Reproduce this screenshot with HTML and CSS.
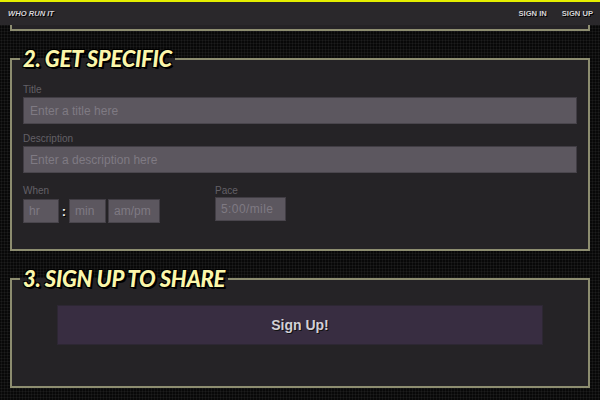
FILE: index.html
```html
<!DOCTYPE html>
<html lang="en">
<head>
<meta charset="utf-8">
<title>Who Run It</title>
<link rel="stylesheet" href="styles.css">
</head>
<body>
<header class="nav">
  <a class="brand" href="#">WHO RUN IT</a>
  <nav class="nav-links">
    <a href="#">SIGN IN</a>
    <a href="#">SIGN UP</a>
  </nav>
</header>
<main class="page">
  <div class="section section-prev"></div>
  <fieldset class="section specifics">
    <legend class="section-title">2. Get Specific</legend>
    <div class="field">
      <label class="label">Title</label>
      <input class="input" type="text" placeholder="Enter a title here">
    </div>
    <div class="field">
      <label class="label">Description</label>
      <input class="input" type="text" placeholder="Enter a description here">
    </div>
    <div class="row">
      <div class="field when">
        <label class="label">When</label>
        <div class="time">
          <input class="input small hr" type="text" placeholder="hr">
          <span class="colon">:</span>
          <input class="input small min" type="text" placeholder="min">
          <input class="input small ampm" type="text" placeholder="am/pm">
        </div>
      </div>
      <div class="field pace">
        <label class="label">Pace</label>
        <input class="input small pace-input" type="text" placeholder="5:00/mile">
      </div>
    </div>
  </fieldset>
  <fieldset class="section share">
    <legend class="section-title">3. Sign Up to Share</legend>
    <div class="btn-wrap">
      <button class="signup-btn" type="button">Sign Up!</button>
    </div>
  </fieldset>
</main>
</body>
</html>
```

FILE: styles.css
```css
* { box-sizing: border-box; }

html, body {
  margin: 0;
  padding: 0;
}

body {
  width: 600px;
  height: 400px;
  overflow: hidden;
  background-color: #080808;
  background-image: radial-gradient(circle, #1d1d1d 0.9px, transparent 1.1px);
  background-size: 3px 3px;
  font-family: "Liberation Sans", Arial, sans-serif;
}

.nav {
  position: fixed;
  top: 0;
  left: 0;
  right: 0;
  height: 25px;
  border-top: 2px solid #e4ee00;
  background: #2a282b;
  display: flex;
  align-items: center;
  justify-content: space-between;
  padding: 0 7px 0 8px;
  z-index: 10;
}

.brand, .nav-links a {
  color: #d6d4d8;
  text-decoration: none;
  font-weight: bold;
  font-size: 7.6px;
  text-shadow: 1px 1px 0 #000;
}

.brand { font-style: italic; }

.nav-links {
  display: flex;
  gap: 15px;
}

.page {
  display: flex;
  flex-direction: column;
}

.section {
  margin: 0 10px;
  border: 2px solid #8d8d70;
  background: #252326;
  padding: 0 11px;
}

.section-prev {
  height: 31px;
  border-top: none;
}

fieldset.section {
  min-width: 0;
  margin-top: 17px;
}

.specifics { padding-top: 14px; }
.share { padding-top: 15px; }

.section-title {
  font-family: "Lato", "Open Sans", sans-serif;
  font-weight: 900;
  font-style: italic;
  text-transform: uppercase;
  font-size: 22px;
  line-height: 22px;
  color: #fbf7ab;
  padding: 0 3px;
  margin-left: -3px;
  letter-spacing: -0.3px;
  text-shadow: 1px 1px 0 #000, -1px 1px 0 #000, 1px -1px 0 #000, -1px -1px 0 #000, 2px 2px 0 #000;
}

.field {
  display: flex;
  flex-direction: column;
}

.label {
  font-size: 10px;
  line-height: 12px;
  color: #636066;
  margin-top: 0;
  margin-bottom: 1px;
}

.field + .field { margin-top: 9px; }

.input {
  height: 27px;
  background: #5c575f;
  border: 1px solid #413d44;
  border-bottom-color: #4a464d;
  color: #ddd;
  font-family: "Liberation Sans", Arial, sans-serif;
  font-size: 12px;
  padding: 0 6px;
  outline: none;
}

.input::placeholder { color: #7f7a83; }

.row {
  display: flex;
  align-items: flex-start;
  gap: 55px;
  margin-top: 12px;
  padding-bottom: 26px;
}

.row .field { margin-top: 0; }

.time {
  display: flex;
  align-items: center;
  margin-top: 1px;
}

.small {
  height: 24px;
  font-size: 12px;
  padding: 0 5px;
}

.hr { width: 36px; }
.min { width: 37px; }
.ampm { width: 52px; margin-left: 2px; }
.pace-input { width: 71px; margin-top: -1px; letter-spacing: 0.4px; }

.colon {
  width: 10px;
  text-align: center;
  color: #f2f2f2;
  font-weight: bold;
  font-size: 13px;
  text-shadow: 1px 1px 0 #000;
}

.btn-wrap {
  padding: 0 34px 41px;
}

.signup-btn {
  display: block;
  width: 100%;
  height: 40px;
  background: #382d41;
  border: 1px solid #2d2733;
  color: #d3d0d6;
  font-family: "Liberation Sans", Arial, sans-serif;
  font-weight: bold;
  font-size: 14px;
  text-shadow: 1px 1px 0 #111;
}
```
